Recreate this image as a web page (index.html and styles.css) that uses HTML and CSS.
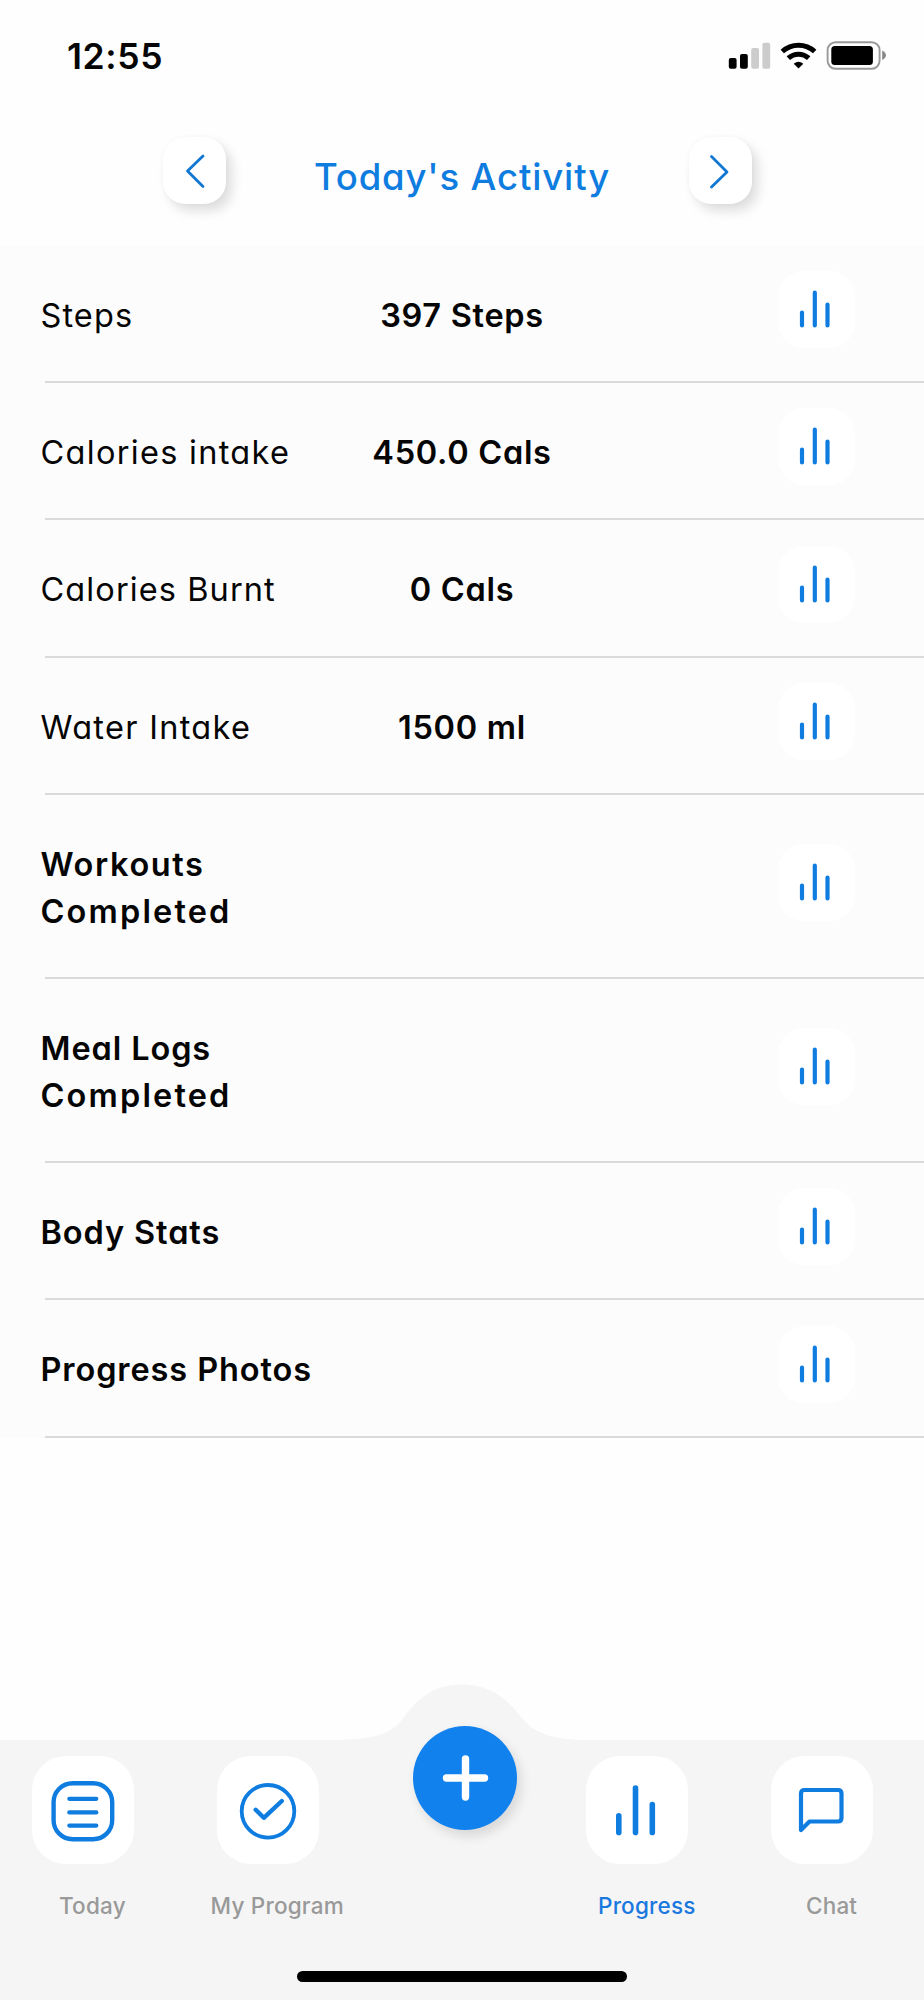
FILE: index.html
```html
<!DOCTYPE html>
<html lang="en">
<head>
<meta charset="utf-8">
<title>Today's Activity</title>
<link rel="stylesheet" href="styles.css">
</head>
<body>
<svg class="defs" aria-hidden="true">
  <symbol id="bars" viewBox="0 0 77 77">
    <path d="M24 41.6V54.4M36.8 21.6V54.4M49.5 33.6V54.4" fill="none" stroke="#0f7ce0" stroke-width="4.2" stroke-linecap="round"/>
  </symbol>
</svg>
<div class="screen">
  <header class="status">
    <span class="clock">12:55</span>
    <svg class="indicators" width="160" height="30" viewBox="728 41 160 30">
      <rect x="728.8" y="58" width="7.8" height="10.7" rx="2"/>
      <rect x="740" y="54" width="7.8" height="14.7" rx="2"/>
      <rect x="751.2" y="48" width="7.8" height="20.7" rx="2" fill="#ccc"/>
      <rect x="762.4" y="42.7" width="7.8" height="26" rx="2" fill="#ccc"/>
      <g fill="none" stroke="#000" stroke-width="5">
        <path d="M782.3 51.5A24 24 0 0 1 814.7 51.5"/>
        <path d="M788.3 58.2A15 15 0 0 1 808.7 58.2"/>
      </g>
      <path d="M793.7 63.7Q798.5 59.7 803.3 63.7L798.5 68.6Z"/>
      <rect x="827.6" y="42.2" width="52" height="26.6" rx="8" fill="none" stroke="#999" stroke-width="1.9"/>
      <rect x="831.3" y="46" width="41.6" height="19" rx="3.5"/>
      <path d="M882.2 50.5Q886 52.5 886 55.3T882.2 60Z" fill="#888"/>
    </svg>
  </header>

  <div class="heading">
    <button class="step"><svg width="63" height="67" viewBox="0 0 63 67"><path d="M40 19L24.5 34L40 49.5"/></svg></button>
    <h1 class="title">Today's Activity</h1>
    <button class="step"><svg width="63" height="67" viewBox="0 0 63 67"><path d="M22.5 19.5L38 35L22.5 50"/></svg></button>
  </div>

  <main class="list">
    <section class="row"><span class="label">Steps</span><span class="value">397 Steps</span><svg class="chart"><use href="#bars"/></svg></section>
    <section class="row"><span class="label wide">Calories intake</span><span class="value">450.0 Cals</span><svg class="chart"><use href="#bars"/></svg></section>
    <section class="row"><span class="label">Calories Burnt</span><span class="value">0 Cals</span><svg class="chart"><use href="#bars"/></svg></section>
    <section class="row"><span class="label wide">Water Intake</span><span class="value">1500 ml</span><svg class="chart"><use href="#bars"/></svg></section>
    <section class="row tall"><span class="label strong"><span class="wider">Workouts</span><br><span class="widest">Completed</span></span><span class="value"></span><svg class="chart"><use href="#bars"/></svg></section>
    <section class="row tall"><span class="label strong">Meal Logs<br><span class="widest">Completed</span></span><span class="value"></span><svg class="chart"><use href="#bars"/></svg></section>
    <section class="row"><span class="label strong">Body Stats</span><span class="value"></span><svg class="chart"><use href="#bars"/></svg></section>
    <section class="row"><span class="label strong">Progress Photos</span><span class="value"></span><svg class="chart"><use href="#bars"/></svg></section>
  </main>

  <footer class="tabbar">
    <svg class="bump" width="260" height="57" viewBox="332 1684 260 57"><path d="M332 1741V1740C372 1740 391 1734 402 1720C414 1703 430 1684.5 462 1684.5S510 1703 522 1718C535 1734 552 1740 592 1740V1741Z"/></svg>
    <nav class="tabs">
      <a class="tab">
        <svg class="tile" viewBox="32 1756 102 108"><rect x="53.6" y="1783.2" width="58.6" height="56" rx="19" stroke-width="4.4"/><path d="M69.3 1798.8H96.3M69.3 1812.4H96.3M69.3 1825.6H96.3" stroke-width="4.2"/></svg>
        <span class="tabname">Today</span>
      </a>
      <a class="tab">
        <svg class="tile" viewBox="217 1756 102 108"><circle cx="268" cy="1811.3" r="26.3" stroke-width="3.8"/><path d="M255.7 1809.8L263.8 1817.8L281.8 1801" stroke-width="4.4"/></svg>
        <span class="tabname">My Program</span>
      </a>
      <span class="tab"></span>
      <a class="tab">
        <svg class="tile" viewBox="586.5 1756 102 108"><path d="M619.3 1815.8V1832.4M636 1788V1832.4M652.8 1804.6V1832.4" stroke-width="5.6"/></svg>
        <span class="tabname active">Progress</span>
      </a>
      <a class="tab">
        <svg class="tile" viewBox="771 1756 102 108"><path d="M801 1830V1793.5Q801 1790 804.5 1790H838Q841.5 1790 841.5 1793.5V1818Q841.5 1821.5 838 1821.5H809.5Z" stroke-width="4.2"/></svg>
        <span class="tabname">Chat</span>
      </a>
    </nav>
    <button class="add"><svg width="104" height="104" viewBox="0 0 104 104"><path d="M33.5 52H71.5M52.5 33V71"/></svg></button>
    <div class="home"></div>
  </footer>
</div>
</body>
</html>
```
FILE: styles.css
```css
* { box-sizing: border-box; }
body {
  margin: 0;
  background: #fefefe;
  color: #050505;
  font-family: Inter, "Liberation Sans", sans-serif;
}
.defs { display: none; }
.screen {
  width: 924px;
  height: 2000px;
  display: flex;
  flex-direction: column;
}
button { border: 0; padding: 0; }
svg { display: block; flex: none; }

.status {
  height: 112px;
  padding: 0 36px 0 67px;
  display: flex;
  justify-content: space-between;
  align-items: center;
}
.clock {
  font-size: 35.5px;
  font-weight: 600;
  letter-spacing: .6px;
}

.heading {
  height: 134px;
  padding: 25px 172px 0 163px;
  display: flex;
  justify-content: space-between;
  align-items: flex-start;
}
.step {
  width: 63px;
  height: 67px;
  border-radius: 22px;
  background: #fff;
  box-shadow: 6px 7px 12px rgba(0, 0, 0, .13), 0 0 5px rgba(0, 0, 0, .03);
}
.step path {
  fill: none;
  stroke: #0f76d2;
  stroke-width: 2.8;
  stroke-linecap: round;
  stroke-linejoin: round;
}
.title {
  margin: 18px 0 0 9px;
  font-size: 36.5px;
  line-height: 44px;
  font-weight: 500;
  letter-spacing: .85px;
  color: #0f7ce0;
  white-space: nowrap;
  font-feature-settings: "cv11";
}

.list { background: #fcfcfc; }
.row {
  height: 137px;
  padding: 0 69px 0 40.5px;
  display: grid;
  grid-template-columns: 300.5px 242px 1fr;
  align-items: center;
  background: linear-gradient(#dadada, #dadada) right bottom / calc(100% - 45px) 2px no-repeat;
}
.row:nth-child(3), .row:last-child { height: 138px; }
.row.tall { height: 184px; }
.label, .value {
  padding-top: 1px;
  font-size: 32.5px;
  line-height: 47px;
  letter-spacing: 1.1px;
  white-space: nowrap;
  font-feature-settings: "cv11";
}
.value { letter-spacing: .7px; }
.strong, .value { font-weight: 600; }
.strong { letter-spacing: .9px; }
.wide { letter-spacing: 1.3px; }
.wider { letter-spacing: 1.6px; }
.widest { letter-spacing: 2.15px; }
.value { text-align: center; }
.chart {
  width: 77px;
  height: 77px;
  margin-bottom: 10px;
  justify-self: end;
  border-radius: 26px;
  background: #fff;
}

.tabbar {
  position: relative;
  height: 260px;
  margin-top: auto;
  background: #f5f5f5;
}
.bump {
  position: absolute;
  left: 332px;
  top: -56px;
  fill: #f5f5f5;
}
.tabs {
  display: grid;
  grid-template-columns: repeat(5, 1fr);
  padding-top: 16px;
}
.tab {
  display: flex;
  flex-direction: column;
  align-items: center;
}
.tile {
  width: 102px;
  height: 108px;
  margin-right: 19px;
  border-radius: 34px;
  background: #fff;
  fill: none;
  stroke: #0f7ce0;
  stroke-linecap: round;
  stroke-linejoin: round;
}
.tabname {
  margin-top: 28px;
  font-size: 22.5px;
  line-height: 28px;
  font-weight: 500;
  letter-spacing: .2px;
  color: #999;
  white-space: nowrap;
}
.active { color: #1a78e0; }
.add {
  position: absolute;
  left: 413px;
  top: -14px;
  width: 104px;
  height: 104px;
  border-radius: 50%;
  background: #1181ee;
  box-shadow: 4px 6px 12px rgba(0, 0, 0, .12);
}
.add path {
  fill: none;
  stroke: #fff;
  stroke-width: 7.4;
  stroke-linecap: round;
}
.home {
  width: 330px;
  height: 11px;
  margin: 51px 0 0 297px;
  border-radius: 6px;
  background: #000;
}
```
